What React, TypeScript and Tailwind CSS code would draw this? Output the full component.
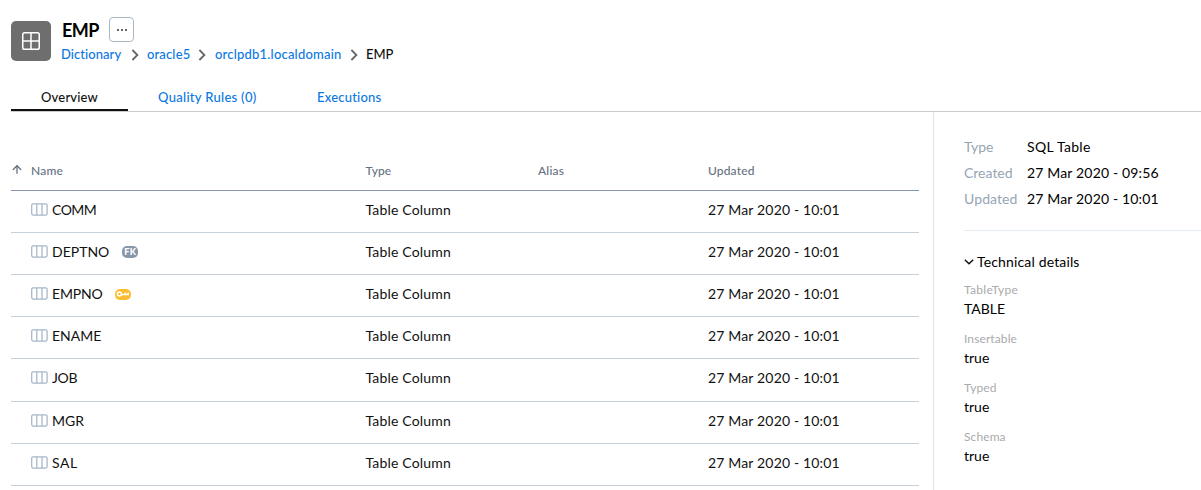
import { ArrowUp } from "lucide-react";

type Row = { name: string; tracking: string; height: string; badge?: "fk" | "key" };

const rows: Row[] = [
  { name: "COMM", tracking: "tracking-[-0.5px]", height: "h-[42px]" },
  { name: "DEPTNO", tracking: "tracking-normal", height: "h-[42px]", badge: "fk" },
  { name: "EMPNO", tracking: "tracking-[-0.2px]", height: "h-[42px]", badge: "key" },
  { name: "ENAME", tracking: "tracking-normal", height: "h-[42px]" },
  { name: "JOB", tracking: "tracking-[-0.3px]", height: "h-[43px]" },
  { name: "MGR", tracking: "tracking-normal", height: "h-[42px]" },
  { name: "SAL", tracking: "tracking-[0.6px]", height: "h-[42px]" },
];

const details = [
  { label: "TableType", value: "TABLE", tracking: "tracking-[0.3px]" },
  { label: "Insertable", value: "true", tracking: "tracking-[0.1px]" },
  { label: "Typed", value: "true", tracking: "tracking-[0.1px]" },
  { label: "Schema", value: "true", tracking: "tracking-[0.1px]" },
];

const grid = "grid grid-cols-[354.5px_172.5px_170px_1fr]";

function TableGlyph() {
  return (
    <svg className="mr-px" width="18" height="18" viewBox="0 0 18 18" fill="none" stroke="#fff" strokeWidth="1.5">
      <rect x="0.75" y="0.75" width="16.5" height="16.5" rx="1.8" />
      <path d="M9 1v16M1 9h16" />
    </svg>
  );
}

function ColumnGlyph() {
  return (
    <svg className="mb-[2px] shrink-0" width="17" height="13" viewBox="0 0 17 13" fill="none" stroke="#a5b6c9" strokeWidth="1.25">
      <rect x="0.7" y="0.8" width="15.4" height="11.2" rx="1.4" />
      <path d="M5.8 1v11M11 1v11" />
    </svg>
  );
}

function Crumb() {
  return (
    <svg className="-ml-px" width="9" height="12" viewBox="0 0 9 12" fill="none" stroke="#666" strokeWidth="1.8">
      <path d="M1.4 1l5 5-5 5" />
    </svg>
  );
}

function Badge({ kind }: { kind: "fk" | "key" }) {
  if (kind === "fk") {
    return (
      <span className="ml-[13px] flex h-3 w-4 items-center justify-center rounded-[5px] bg-[#8797a8] text-[9px] leading-3 font-black tracking-[0.3px] text-white">
        FK
      </span>
    );
  }
  return (
    <span className="ml-[13px] flex h-[11px] w-4 items-center justify-center rounded-[5px] bg-[#fbbd2d]">
      <svg width="14" height="8" viewBox="0 0 14 8" fill="none" stroke="#fff" strokeWidth="1.5">
        <circle cx="3.4" cy="4" r="2" />
        <path d="M5.4 4.6H13M9.3 4.5V2.5M12.2 4.5V2.5" />
      </svg>
    </span>
  );
}

export default function App() {
  return (
    <div className="flex h-[490px] w-full flex-col overflow-hidden bg-white pl-[11px] font-[Lato,sans-serif] text-[14px] text-[#111] [font-variant-ligatures:none]">
      <header className="flex h-[84px] pt-[17px]">
        <div className="mt-1 flex size-10 items-center justify-center rounded-[5px] bg-[#6e6e6e]">
          <TableGlyph />
        </div>
        <div className="ml-2.5">
          <div className="flex h-[25px] items-center">
            <h1 className="w-[48px] pt-px pl-px text-[18px] leading-[25px] font-bold tracking-[-0.5px] text-black">EMP</h1>
            <button className="flex size-[25px] items-center justify-center gap-[2px] rounded border border-[#a9b6c6]">
              <span className="size-[2px] bg-[#666]" />
              <span className="size-[2px] bg-[#666]" />
              <span className="size-[2px] bg-[#666]" />
            </button>
          </div>
          <nav className="mt-[3px] flex h-5 items-center text-[13px] font-medium text-[#0b78e3]">
            <span className="w-[71px] tracking-[0.05px]">Dictionary</span>
            <Crumb />
            <span className="ml-[7px] w-[52px] tracking-[0.15px]">oracle5</span>
            <Crumb />
            <span className="ml-2 w-[136px] tracking-[0.2px]">orclpdb1.localdomain</span>
            <Crumb />
            <span className="ml-[7px] text-[#111]">EMP</span>
          </nav>
        </div>
      </header>

      <div className="flex h-7 shrink-0 border-b border-[#c9cccf] text-[13px] font-medium text-[#0b78e3]">
        <div className="h-[27px] w-[117px] border-b-2 border-[#111] pl-[30px] leading-[27px] tracking-[0.18px] text-[#111]">Overview</div>
        <div className="ml-[30px] w-[159px] leading-[27px] tracking-[0.3px]">Quality Rules (0)</div>
        <div className="leading-[27px] tracking-[0.2px]">Executions</div>
      </div>

      <div className="flex flex-1">
        <main className="w-[908px] pt-[42px]">
          <div className={`${grid} h-[37px] border-b border-[#8496ab] text-[12px] leading-[33px] font-medium text-[#66727f]`}>
            <div className="flex">
              <ArrowUp className="mt-[9px] -ml-px h-[13px] w-[14px]" strokeWidth={2.4} />
              <span className="ml-[7px] tracking-[0.2px]">Name</span>
            </div>
            <div className="tracking-[0.1px]">Type</div>
            <div className="tracking-[0.2px]">Alias</div>
            <div className="tracking-[0.15px]">Updated</div>
          </div>
          {rows.map((row) => (
            <div key={row.name} className={`${grid} ${row.height} border-b border-[#c8d1da] leading-[38px]`}>
              <div className="flex h-[38px] items-center pl-5">
                <ColumnGlyph />
                <span className={`ml-1 ${row.tracking}`}>{row.name}</span>
                {row.badge && <Badge kind={row.badge} />}
              </div>
              <div className="tracking-[0.17px]">Table Column</div>
              <div />
              <div className="tracking-[0.16px]">27 Mar 2020 - 10:01</div>
            </div>
          ))}
        </main>

        <aside className="ml-3.5 flex-1 border-l border-[#e0e2e4] pt-[22px] pl-[30px] text-black">
          <div className="grid grid-cols-[63px_1fr] border-b border-[#e5ebf2] pb-[18px] leading-[26px]">
            <span className="text-[#95a5b4]">Type</span>
            <span className="tracking-[0.3px]">SQL Table</span>
            <span className="text-[#95a5b4]">Created</span>
            <span className="tracking-[0.16px]">27 Mar 2020 - 09:56</span>
            <span className="tracking-[0.1px] text-[#95a5b4]">Updated</span>
            <span className="tracking-[0.16px]">27 Mar 2020 - 10:01</span>
          </div>
          <div className="mt-[18px] flex h-6 items-center">
            <svg className="mt-[2px]" width="10" height="6" viewBox="0 0 10 6" fill="none" stroke="#111" strokeWidth="1.5">
              <path d="M0.8 0.8l4.2 4 4.2-4" />
            </svg>
            <span className="ml-[3px] tracking-[0.15px]">Technical details</span>
          </div>
          <div className="mt-[7px] flex flex-col gap-[9px]">
            {details.map((item) => (
              <div key={item.label} className="h-10">
                <div className={`h-[19px] text-[12px] leading-5 text-[#aaa] ${item.tracking}`}>{item.label}</div>
                <div className="h-5 leading-5">{item.value}</div>
              </div>
            ))}
          </div>
        </aside>
      </div>
    </div>
  );
}
